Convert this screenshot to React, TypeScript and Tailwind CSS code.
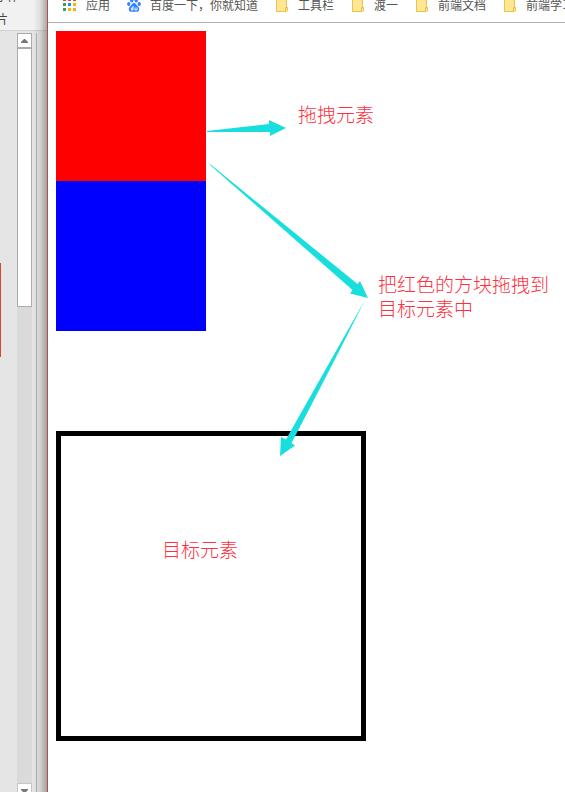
const cjk = "font-['Noto_Sans_CJK_SC',sans-serif]";

function Folder() {
  return (
    <svg className="h-3 w-3 shrink-0" viewBox="0 0 12 12">
      <path d="M.5 -3V11.5H10.5L11.5 10.5V7.5H10.5V-3Z" fill="#ffe690" stroke="#e6c34c" />
      <path d="M9.5 11V7.5H11.5V10.5L10.5 11.5H9.5" fill="#ffe690" stroke="#e6c34c" />
    </svg>
  );
}

function AppsGrid() {
  const colors = ["#ea4335", "#ea4335", "#ea4335", "#34a05a", "#2b85f8", "#fbb004", "#34a05a", "#fbb004", "#fbb004"];
  return (
    <svg className="h-[11px] w-[13px] shrink-0" viewBox="0 0 13 11">
      {colors.map((c, i) => (
        <rect key={i} x={(i % 3) * 5} y={Math.floor(i / 3) * 5 - 2} width="3" height="3" fill={c} />
      ))}
    </svg>
  );
}

function Paw() {
  return (
    <svg className="h-3 w-[14px] shrink-0" viewBox="0 0 14 12" fill="#3385ff">
      <ellipse cx="4.8" cy="0.2" rx="1.7" ry="2.2" />
      <ellipse cx="9.2" cy="0.2" rx="1.7" ry="2.2" />
      <ellipse cx="1.8" cy="4" rx="1.7" ry="2.1" />
      <ellipse cx="12.2" cy="4" rx="1.7" ry="2.1" />
      <path d="M7 3C5 3 4.8 5 3.2 6.2C1 8 1.4 11.8 4.4 11.8C6 11.8 8 11.8 9.6 11.8C12.8 11.8 13 8 10.8 6.2C9.2 5 9 3 7 3Z" />
      <path d="M6 6V10H4.5V8H6M8 7.5V10H10V7.5" fill="none" stroke="#fff" strokeWidth=".9" />
    </svg>
  );
}

function EditorEdge() {
  return (
    <aside className="relative flex h-full w-[47px] shrink-0 flex-col overflow-hidden bg-[#e5e5e5]">
      <div className={"relative h-[31px] shrink-0 overflow-hidden border-b border-[#d2d2d2] bg-[#f1f1f1] text-xs text-[#444] " + cjk}>
        <span className="absolute -left-[8px] -top-[10px] leading-4">节</span>
        <span className="absolute left-[7px] -top-[12px] leading-4">作</span>
        <span className="absolute -left-[4px] top-[11px] leading-4">片</span>
      </div>
      <div className="flex min-h-0 flex-1">
        <div className="w-[17px] pt-[232px]">
          <div className="h-[94px] w-px bg-[#dc4727]" />
        </div>
        <div className="mt-[2px] flex w-[15px] flex-col bg-[#dadada]">
          <div className="flex h-[15px] shrink-0 items-center justify-center border border-[#ababab] bg-white">
            <svg className="h-1 w-[7px]" viewBox="0 0 7 4"><path d="M0 4V3L3 0H4L7 3V4Z" fill="#777" /></svg>
          </div>
          <div className="h-[259px] shrink-0 border border-[#ababab] bg-white" />
          <div className="flex-1" />
          <div className="flex h-[9px] shrink-0 items-end justify-center border border-b-0 border-[#c6c6c6] bg-white">
            <svg className="h-[3px] w-[7px]" viewBox="0 0 7 3"><path d="M0 0H7V1L5 3H2L0 1Z" fill="#777" /></svg>
          </div>
        </div>
        <div className="ml-1 mt-[2px] w-px bg-[#b5b5b5]" />
      </div>
      <div className="absolute inset-y-0 right-0 w-[14px] bg-linear-to-r from-transparent via-black/8 to-black/30" />
    </aside>
  );
}

export default function App() {
  const note = "absolute whitespace-nowrap text-[19px] font-light leading-6 text-[#ff3040] " + cjk;
  return (
    <div className="relative flex h-[792px] w-[565px] overflow-hidden bg-white">
      <EditorEdge />
      <div className="min-w-0 flex-1 border-l border-[#b94a48]">
        <nav className={"flex h-[23px] items-start overflow-hidden whitespace-nowrap border-b border-[#b0b0b0] text-xs leading-[10px] text-[#555] " + cjk}>
          <div className="ml-[15px] flex w-[64px] shrink-0 gap-[10px]"><AppsGrid /><span>应用</span></div>
          <div className="flex w-[149px] shrink-0 gap-[9px]"><Paw /><span>百度一下，你就知道</span></div>
          <div className="flex w-[76px] shrink-0 gap-[10px]"><Folder /><span>工具栏</span></div>
          <div className="flex w-[64px] shrink-0 gap-[10px]"><Folder /><span>渡一</span></div>
          <div className="flex w-[88px] shrink-0 gap-[10px]"><Folder /><span>前端文档</span></div>
          <div className="flex shrink-0 gap-[10px]"><Folder /><span>前端学习</span></div>
        </nav>
        <main className="p-2">
          <div className="size-[150px] bg-[#f00]" />
          <div className="size-[150px] bg-[#00f]" />
          <div className="mt-[100px] size-[310px] border-5 border-black" />
        </main>
      </div>
      <svg className="absolute inset-0 h-[792px] w-[565px]" viewBox="0 0 565 792" fill="#18dede">
        <path d="M207 131L269 124V120L286 128L270 136V132L207 132Z" />
        <path d="M210 164L357.5 284L360 281L368 298L350 293.5L352.5 290L210 165Z" />
        <path d="M365 300Q334 362 291.5 443L295 445.5L280 456L281 437L286 439.5Q324 372 365 300Z" />
      </svg>
      <p className={note + " left-[298px] top-[102px]"}>拖拽元素</p>
      <p className={note + " left-[378px] top-[272px]"}>把红色的方块拖拽到<br />目标元素中</p>
      <p className={note + " left-[162px] top-[537px]"}>目标元素</p>
    </div>
  );
}
